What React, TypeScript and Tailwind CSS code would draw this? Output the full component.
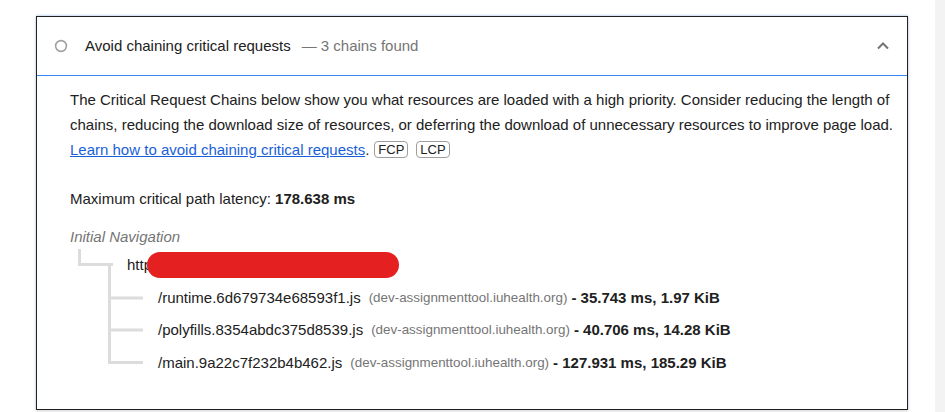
import React from 'react';

interface ChainRow {
    path: string;
    host: string;
    stats: string;
}

const rows: ChainRow[] = [
    { path: '/runtime.6d679734e68593f1.js', host: '(dev-assignmenttool.iuhealth.org)', stats: '- 35.743 ms, 1.97 KiB' },
    { path: '/polyfills.8354abdc375d8539.js', host: '(dev-assignmenttool.iuhealth.org)', stats: '- 40.706 ms, 14.28 KiB' },
    { path: '/main.9a22c7f232b4b462.js', host: '(dev-assignmenttool.iuhealth.org)', stats: '- 127.931 ms, 185.29 KiB' },
];

const Badge: React.FC<{ label: string }> = ({ label }) => (
    <span className="inline-block align-middle ml-[5px] -mt-[3px] px-[3px] border border-[#9e9e9e] rounded-[4px] text-[13px] leading-[15px] text-[#212121]">
        {label}
    </span>
);

// --- connector lines of the request tree ---
const TreeLines: React.FC = () => (
    <svg className="absolute left-0 top-0" width="80" height="120" viewBox="0 0 80 120" fill="none">
        <g stroke="#dcdcdc" strokeWidth="3">
            <path d="M9.5 0 V15.5 H43" />
            <path d="M39.5 14 V115" />
            <path d="M38 49 H73" />
            <path d="M38 81 H73" />
            <path d="M38 113.5 H73" />
        </g>
    </svg>
);

const App: React.FC = () => {
    return (
        <div className="w-[945px] h-[412px] bg-white flex overflow-hidden font-['Liberation_Sans',Arial,sans-serif] text-[15px] text-[#212121]">
            <div className="flex-1 pl-[36px] pt-[16px]">
                <div className="w-[872px] border border-[#202124] bg-white shadow-[0_1px_3px_rgba(0,0,0,0.18),0_-1px_2px_rgba(66,133,244,0.25)]">
                    {/* HEADER */}
                    <div className="h-[59px] border-b border-[#3b86f2] flex items-center pl-[17px] pr-[16px]">
                        <svg width="14" height="14" viewBox="0 0 14 14" className="mr-[17px]">
                            <circle cx="7" cy="7" r="5.4" stroke="#a0a0a0" strokeWidth="1.6" fill="none" />
                        </svg>
                        <span>Avoid chaining critical requests</span>
                        <span className="ml-[11px] text-[#757575]">— 3 chains found</span>
                        <svg width="14" height="10" viewBox="0 0 14 10" className="ml-auto mr-[1px]">
                            <path d="M2 7.5 L7 2.5 L12 7.5" stroke="#757575" strokeWidth="2" fill="none" />
                        </svg>
                    </div>

                    {/* BODY */}
                    <div className="pl-[33px] pr-[12px] pt-[11px] pb-[30px]">
                        <p className="leading-[25px]">
                            The Critical Request Chains below show you what resources are loaded with a high priority. Consider reducing the length of chains, reducing the download size of resources, or deferring the download of unnecessary resources to improve page load.{' '}
                            <a href="#" className="text-[#1a5fd8] underline">Learn how to avoid chaining critical requests</a>.
                            <Badge label="FCP" />
                            <span className="ml-[3px]"><Badge label="LCP" /></span>
                        </p>

                        <div className="mt-[25px] leading-[24px]">
                            Maximum critical path latency: <b>178.638 ms</b>
                        </div>

                        <div className="mt-[14px] leading-[24px] italic text-[#757575]">Initial Navigation</div>

                        <div className="relative">
                            <TreeLines />
                            <div className="h-[32.5px] flex items-center pl-[57px] relative">
                                <span>http</span>
                                <span className="absolute left-[77px] top-[3px] w-[252px] h-[26px] rounded-[13px] bg-[#e52020]"></span>
                            </div>
                            {rows.map(r => (
                                <div key={r.path} className="h-[32.5px] flex items-center pl-[88px] whitespace-nowrap">
                                    <span>{r.path}</span>
                                    <span className="ml-[8px] text-[13.4px] text-[#757575]">{r.host}</span>
                                    <b className="ml-[4px]">{r.stats}</b>
                                </div>
                            ))}
                        </div>
                    </div>
                </div>
            </div>
            <div className="w-[10px] bg-[#f3f3f3]"></div>
        </div>
    );
};

export default App;
